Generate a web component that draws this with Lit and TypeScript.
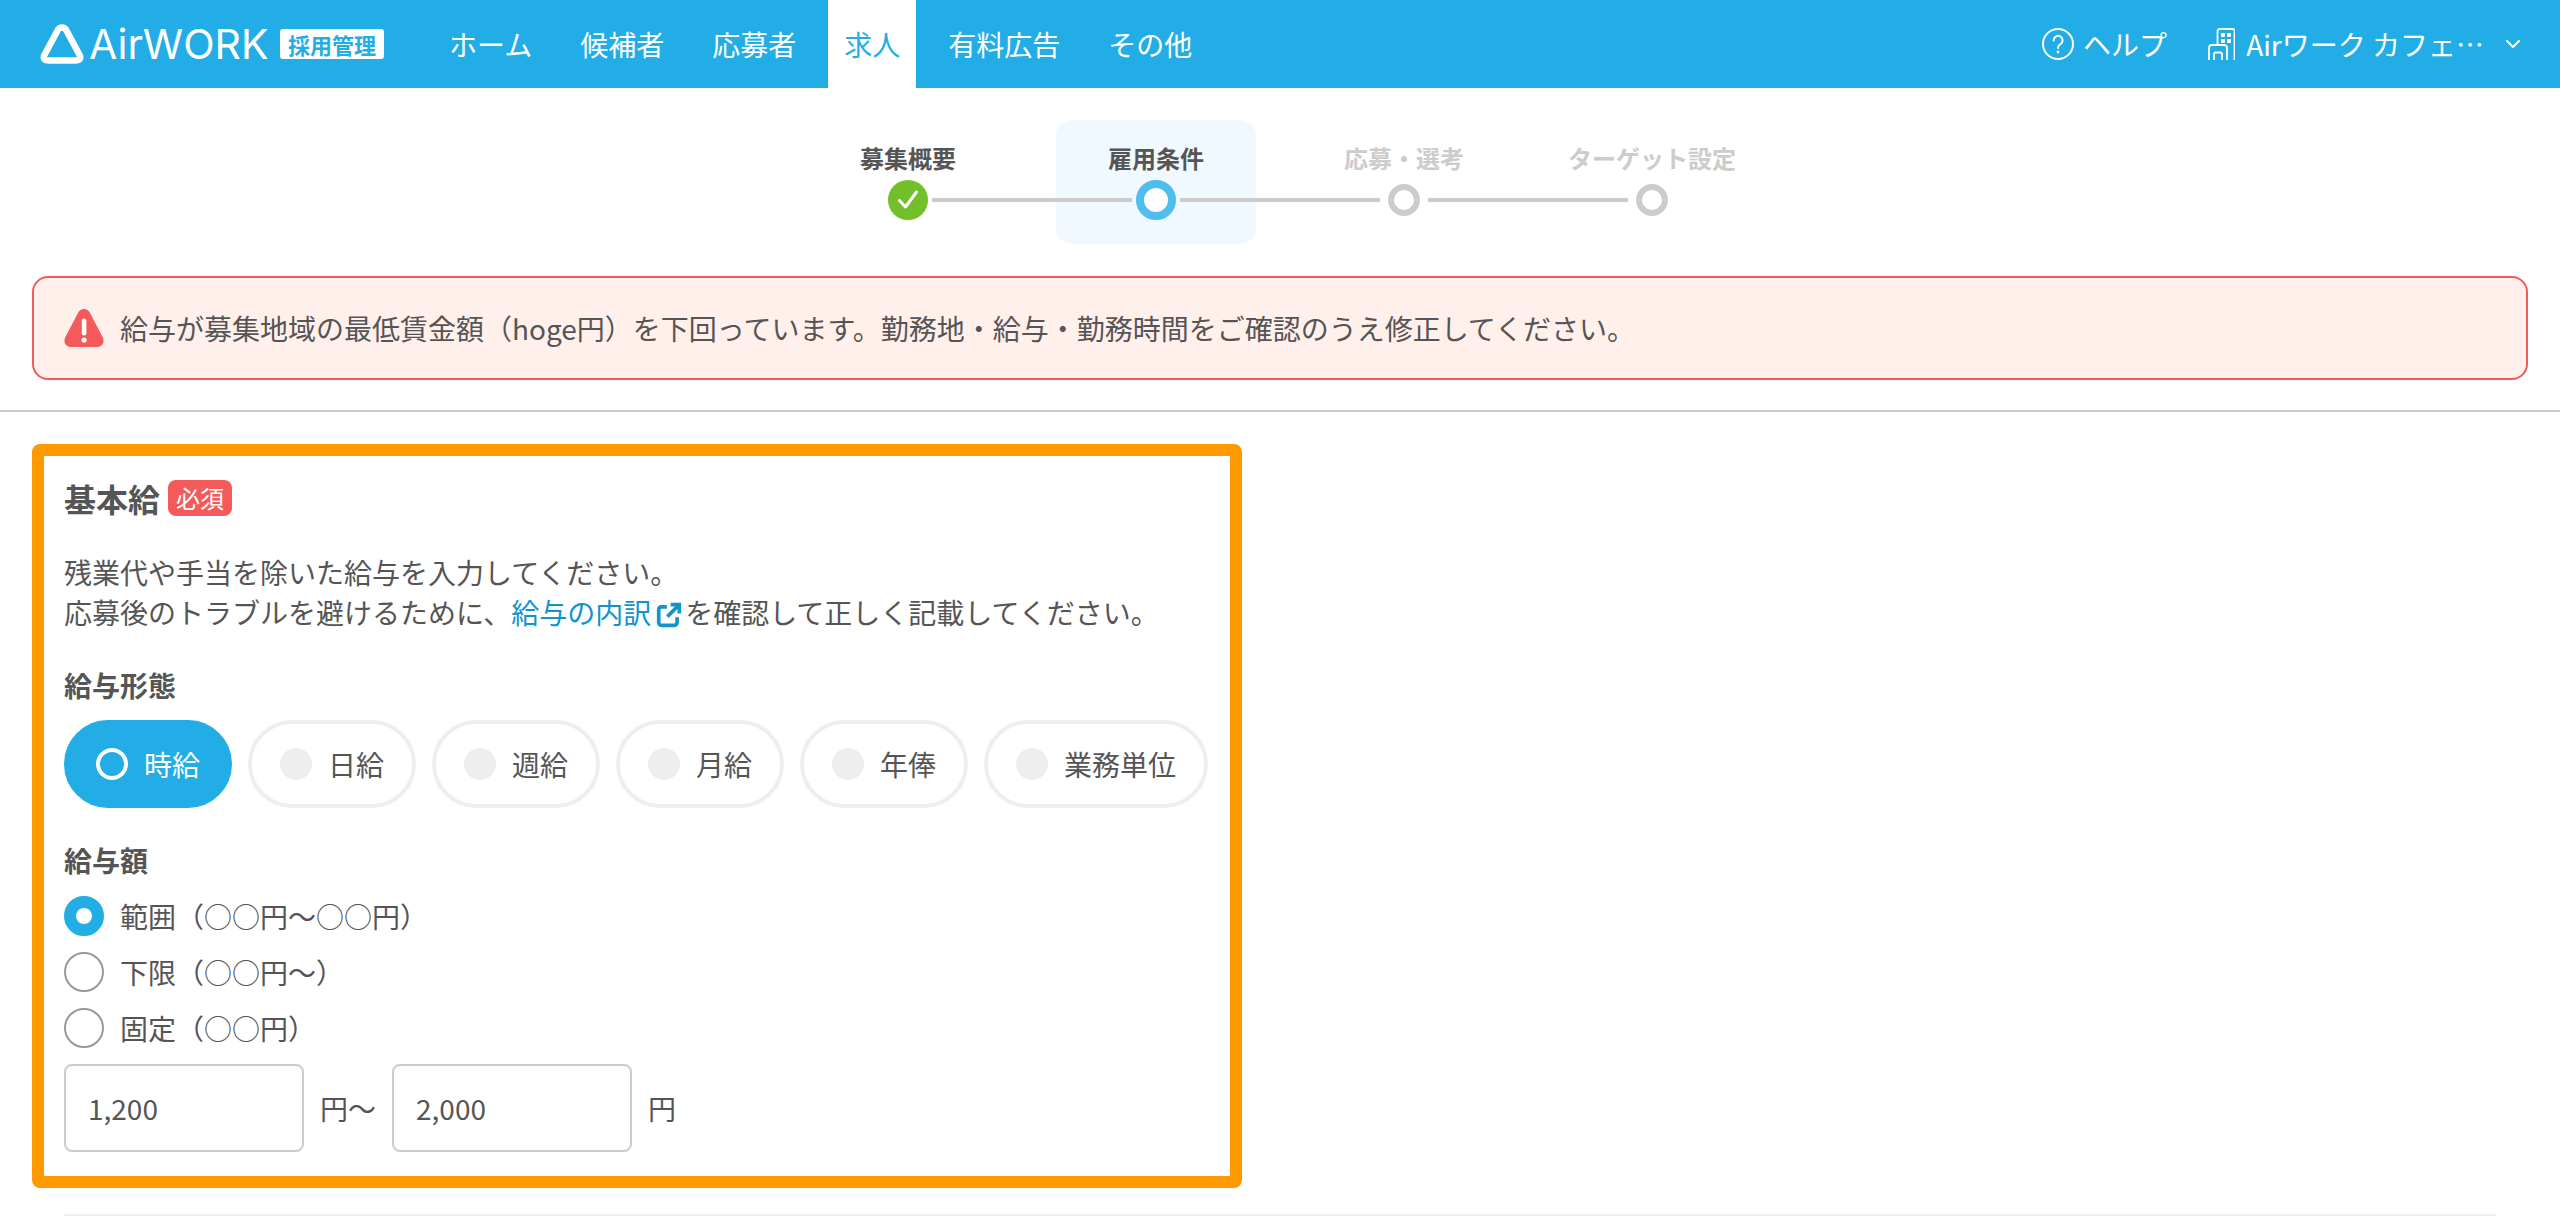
import { LitElement, html, css } from "lit";
import { customElement } from "lit/decorators.js";

const triangle = html`<svg class="tri" viewBox="0 0 44 40" aria-hidden="true"><path d="M22 3.6c2.2 0 3.6 1.2 4.6 3.2L39.6 31c1.8 3.6-.6 5.6-3.6 5.6H8c-3 0-5.4-2-3.6-5.6L17.4 6.8c1-2 2.4-3.2 4.6-3.2z" fill="none" stroke="#fff" stroke-width="6.5" stroke-linejoin="round"/></svg>`;

const helpIcon = html`<svg class="ic32" viewBox="0 0 32 32" aria-hidden="true"><circle cx="16" cy="16" r="15" fill="none" stroke="#fff" stroke-width="2"/><path d="M11.6 12.4a4.5 4.500 0 1 1 6.9 3.8c-1.7 1-2.5 2-2.5 3.8" fill="none" stroke="#fff" stroke-width="2" stroke-linecap="round"/><circle cx="16" cy="24" r="1.4" fill="#fff"/></svg>`;

const buildingIcon = html`<svg class="bld" viewBox="0 0 27 32" aria-hidden="true"><g fill="none" stroke="#fff" stroke-width="1.8"><path d="M9.5 16V3a2 2 0 0 1 2-2h13a2 2 0 0 1 2 2v29"/><path d="M1 32V20a3 3 0 0 1 3-3h12a3 3 0 0 1 3 3v12"/><path d="M6 32v-6a1.5 1.5 0 0 1 1.5-1.5h5A1.5 1.5 0 0 1 14 26v6"/></g><g fill="#fff"><rect x="13" y="5" width="4" height="4" rx=".8"/><rect x="19" y="5" width="4" height="4" rx=".8"/><rect x="13" y="11" width="4" height="4" rx=".8"/><rect x="19" y="11" width="4" height="4" rx=".8"/></g></svg>`;

const chevron = html`<svg class="chev" viewBox="0 0 14 8" aria-hidden="true"><path d="M1 1l6 6 6-6" fill="none" stroke="#fff" stroke-width="2" stroke-linecap="round" stroke-linejoin="round"/></svg>`;

const checkIcon = html`<svg class="ic40" viewBox="0 0 40 40" aria-hidden="true"><circle cx="20" cy="20" r="20" fill="#73bf2a"/><path d="M11.5 20.5l6 6.5 11-15" fill="none" stroke="#fff" stroke-width="3" stroke-linecap="round" stroke-linejoin="round"/></svg>`;

const alertIcon = html`<svg class="alert-ic" viewBox="0 0 40 38" aria-hidden="true"><path d="M20 0c2.6 0 4.6 1.4 6 4l12.6 24c2.6 5-.4 10-5.6 10H7c-5.2 0-8.2-5-5.6-10L14 4c1.4-2.6 3.4-4 6-4z" fill="#f55a5a"/><rect x="17.8" y="9.5" width="4.6" height="17" rx="2.3" fill="#fff"/><circle cx="20.1" cy="31" r="2.6" fill="#fff"/></svg>`;

const extIcon = html`<svg class="ext" viewBox="0 0 24 24" aria-hidden="true"><g fill="none" stroke="#0f95cc" stroke-width="3.4"><path d="M10 4.500H5A2.500 2.500 0 0 0 2.500 7v12A2.500 2.500 0 0 0 5 21.500h12a2.500 2.500 0 0 0 2.500-2.500v-5"/><path d="M10.500 13.500L21 3"/><path d="M13.500 2.500h8v8"/></g></svg>`;

const steps = [
  { label: "募集概要", state: "done" },
  { label: "雇用条件", state: "active" },
  { label: "応募・選考", state: "todo" },
  { label: "ターゲット設定", state: "todo" },
];
const nav = ["ホーム", "候補者", "応募者", "求人", "有料広告", "その他"];
const wages = ["時給", "日給", "週給", "月給", "年俸", "業務単位"];
const radios = ["範囲（○○円〜○○円）", "下限（○○円〜）", "固定（○○円）"];

@customElement("app-root")
export class AppRoot extends LitElement {
  static styles = css`
    :host {
      display: block;
      height: 1216px;
      overflow: hidden;
      background: #fff;
      color: #555;
      font-family: "Noto Sans CJK JP", "Noto Sans", sans-serif;
      font-size: 28px;
      line-height: 40px;
    }
    svg { display: block; flex: none; }
    .header {
      display: flex;
      align-items: center;
      height: 88px;
      padding: 0 40px;
      background: #22ade6;
      color: #fff;
    }
    .logo { display: flex; align-items: center; width: 393px; flex: none; }
    .tri { width: 44px; height: 40px; }
    .wordmark {
      margin-left: 5px;
      font-family: Inter, sans-serif;
      font-size: 41px;
      line-height: 40px;
      width: 176px;
      white-space: nowrap;
      letter-spacing: 0;
    }
    .tag {
      margin-left: 15px;
      width: 104px;
      height: 30px;
      border-radius: 3px;
      background: #fff;
      color: #22ade6;
      font-size: 22px;
      font-weight: 700;
      line-height: 30px;
      text-align: center;
      white-space: nowrap;
    }
    .nav { display: flex; gap: 16px; height: 88px; }
    .nav-item { padding: 0 16px; line-height: 88px; white-space: nowrap; }
    .nav-item.on { background: #fff; color: #22ade6; }
    .right { display: flex; align-items: center; margin-left: auto; white-space: nowrap; }
    .ic32 { width: 32px; height: 32px; }
    .bld { width: 27px; height: 32px; }
    .chev { width: 14px; height: 8px; margin-left: 22px; }
    .help { margin-left: 9px; margin-right: 41px; }
    .shop { margin-left: 11px; }

    .steps { display: flex; justify-content: center; padding-top: 32px; }
    .step {
      position: relative;
      width: 248px;
      height: 124px;
      padding-top: 20px;
      box-sizing: border-box;
      display: flex;
      flex-direction: column;
      align-items: center;
      color: #ccc;
      font-size: 24px;
      font-weight: 700;
      line-height: 36px;
      white-space: nowrap;
    }
    .step.done, .step.active { color: #555; }
    .step.active::before {
      content: "";
      position: absolute;
      top: 0;
      left: 24px;
      width: 200px;
      height: 124px;
      border-radius: 16px;
      background: #f0f9ff;
    }
    .step span { position: relative; }
    .slot {
      position: relative;
      height: 40px;
      margin-top: 4px;
      display: flex;
      align-items: center;
    }
    .ic40 { width: 40px; height: 40px; }
    .ring {
      box-sizing: border-box;
      width: 32px;
      height: 32px;
      border: 6px solid #ccc;
      border-radius: 50%;
      background: #fff;
    }
    .ring.big { width: 40px; height: 40px; border: 8px solid #4fbdee; }
    .link {
      position: absolute;
      z-index: 1;
      top: 78px;
      left: 148px;
      width: 200px;
      height: 4px;
      background: #ccc;
    }
    .alert {
      display: flex;
      align-items: center;
      gap: 16px;
      height: 104px;
      box-sizing: border-box;
      margin: 32px 32px 0;
      padding: 0 30px;
      border: 2px solid #f55a5a;
      border-radius: 16px;
      background: #fff0ec;
      white-space: nowrap;
    }
    .alert-ic { width: 40px; height: 38px; }
    .divider { height: 2px; margin-top: 30px; background: #ccc; }
    .box {
      box-sizing: border-box;
      width: 1210px;
      height: 744px;
      margin: 32px 0 0 32px;
      padding: 24px 20px;
      border: 12px solid #ff9900;
      border-radius: 8px;
    }
    .title { display: flex; align-items: center; gap: 8px; height: 36px; }
    .title h2 { margin: 0; font-size: 32px; line-height: 36px; font-weight: 700; }
    .req {
      width: 64px;
      height: 36px;
      border-radius: 8px;
      background: #f55a5a;
      color: #fff;
      font-size: 24px;
      line-height: 36px;
      text-align: center;
    }
    .desc { margin: 36px 0 0; white-space: nowrap; }
    .desc a { color: #0f95cc; text-decoration: none; }
    .ext { display: inline-block; width: 26px; height: 26px; vertical-align: -4px; margin: 0 3px 0 5px; }
    .label { margin: 33px 0 0; font-weight: 700; font-size: 28px; line-height: 40px; }
    .label.amount { margin-top: 32px; }
    .pills { display: flex; gap: 16px; margin-top: 15px; }
    .pill {
      display: flex;
      align-items: center;
      gap: 16px;
      height: 88px;
      box-sizing: border-box;
      padding: 0 28px;
      border: 4px solid #eee;
      border-radius: 44px;
      white-space: nowrap;
    }
    .pill i {
      width: 32px;
      height: 32px;
      box-sizing: border-box;
      border-radius: 50%;
      background: #eee;
    }
    .pill.on { background: #22ade6; border-color: #22ade6; color: #fff; }
    .pill.on i { background: transparent; border: 4px solid #fff; }
    .radios { display: flex; flex-direction: column; gap: 16px; margin-top: 16px; }
    .radio { display: flex; align-items: center; gap: 16px; height: 40px; white-space: nowrap; }
    .radio i {
      width: 40px;
      height: 40px;
      box-sizing: border-box;
      border: 2px solid #999;
      border-radius: 50%;
      background: #fff;
    }
    .radio.on i { border: 12px solid #22ade6; }
    .inputs { display: flex; align-items: center; gap: 16px; margin-top: 16px; }
    .inputs input {
      width: 240px;
      height: 88px;
      box-sizing: border-box;
      padding: 0 22px;
      border: 2px solid #ccc;
      border-radius: 8px;
      font: inherit;
      color: #555;
      background: #fff;
      outline: none;
    }
    .bottom { height: 2px; margin: 26px 64px 0; background: #eee; }
  `;

  render() {
    return html`
      <header class="header">
        <div class="logo">
          ${triangle}
          <span class="wordmark">AirWORK</span>
          <span class="tag">採用管理</span>
        </div>
        <nav class="nav">
          ${nav.map((n) => html`<div class="nav-item ${n === "求人" ? "on" : ""}">${n}</div>`)}
        </nav>
        <div class="right">
          ${helpIcon}
          <span class="help">ヘルプ</span>
          ${buildingIcon}
          <span class="shop">Airワーク カフェ…</span>
          ${chevron}
        </div>
      </header>

      <section class="steps">
        ${steps.map(
          (s, i) => html`
            <div class="step ${s.state}">
              <span>${s.label}</span>
              <div class="slot">
                ${s.state === "done"
                  ? checkIcon
                  : html`<div class="ring ${s.state === "active" ? "big" : ""}"></div>`}
              </div>
              ${i < steps.length - 1 ? html`<div class="link"></div>` : ""}
            </div>
          `
        )}
      </section>

      <div class="alert">
        ${alertIcon}
        <span>給与が募集地域の最低賃金額（hoge円）を下回っています。勤務地・給与・勤務時間をご確認のうえ修正してください。</span>
      </div>
      <div class="divider"></div>

      <section class="box">
        <div class="title"><h2>基本給</h2><span class="req">必須</span></div>
        <p class="desc">
          残業代や手当を除いた給与を入力してください。<br />
          応募後のトラブルを避けるために、<a href="#">給与の内訳${extIcon}</a>を確認して正しく記載してください。
        </p>
        <div class="label">給与形態</div>
        <div class="pills">
          ${wages.map((w, i) => html`<div class="pill ${i === 0 ? "on" : ""}"><i></i><span>${w}</span></div>`)}
        </div>
        <div class="label amount">給与額</div>
        <div class="radios">
          ${radios.map((r, i) => html`<div class="radio ${i === 0 ? "on" : ""}"><i></i><span>${r}</span></div>`)}
        </div>
        <div class="inputs">
          <input value="1,200" />
          <span>円〜</span>
          <input value="2,000" />
          <span>円</span>
        </div>
      </section>
      <div class="bottom"></div>
    `;
  }
}
